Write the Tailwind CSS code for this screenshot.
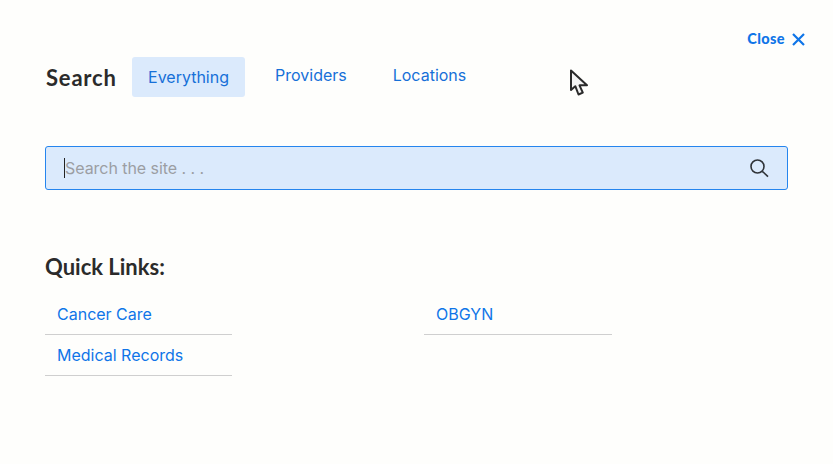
<!DOCTYPE html>
<html lang="en">
<head>
  <meta charset="UTF-8">
  <meta name="viewport" content="width=device-width, initial-scale=1.0">
  <title>Search</title>
  <script src="https://cdn.jsdelivr.net/npm/@tailwindcss/browser@4"></script>
</head>
<body class="bg-[#fefefc] h-[464px] overflow-hidden relative font-['Inter',sans-serif]">
  <div class="pl-[45px] pr-[45px] pt-[30px]">
    <!-- close -->
    <div class="flex justify-end items-center gap-[7px] h-[18px] mr-[-17px] text-[#0f75e8]">
      <span class="font-['Lato',sans-serif] font-black text-[14.500px] tracking-[0.4px]">Close</span>
      <svg class="w-[13px] h-[13px]" viewBox="0 0 13 13" fill="none" stroke="currentColor" stroke-width="2.200"><path d="M1 1l11 11M12 1L1 12"/></svg>
    </div>

    <!-- tabs -->
    <div class="flex items-center h-[40px] mt-[9px]">
      <h2 class="w-[87px] pl-[1px] font-['Lato',sans-serif] font-bold text-[22px] tracking-[0.8px] text-[#2b2b2b]">Search</h2>
      <button class="w-[113px] h-[40px] rounded-[3px] bg-[#dbeafc] text-[16px] text-[#1670d8]">Everything</button>
      <button class="ml-[30px] mb-[4px] text-[16px] text-[#1670d8]">Providers</button>
      <button class="ml-[46px] mb-[4px] text-[16px] text-[#1670d8]">Locations</button>
    </div>

    <!-- search box -->
    <div class="flex items-center justify-between h-[44px] mt-[49px] pl-[18px] pr-[18px] bg-[#dbeafc] border border-[#2585ee] rounded-[3px]">
      <span class="border-l border-[#222] h-[20px] leading-[20px] text-[16px] tracking-[-0.05px] text-[#9b9ea3]">Search the site . . .</span>
      <svg class="w-[20px] h-[20px]" viewBox="0 0 20 20" fill="none" stroke="#2f3338" stroke-width="1.600"><circle cx="8.500" cy="8.500" r="6.500"/><path d="M13.300 13.300L19 18.600"/></svg>
    </div>

    <h3 class="mt-[65px] font-['Lato',sans-serif] font-bold text-[22px] leading-[24px] text-[#2b2b2b]">Quick Links:</h3>

    <!-- links -->
    <div class="grid grid-cols-[187px_188px] gap-x-[192px] mt-[15px] text-[16px] text-[#0f75e8]">
      <a class="h-[41px] flex items-center pl-[12px] border-b border-[#cfcfcf]">Cancer Care</a>
      <a class="h-[41px] flex items-center pl-[12px] border-b border-[#cfcfcf]">OBGYN</a>
      <a class="h-[41px] flex items-center pl-[12px] border-b border-[#cfcfcf]">Medical Records</a>
    </div>
  </div>

  <!-- mouse pointer -->
  <svg class="absolute left-[569px] top-[69px] w-[20px] h-[28px]" viewBox="0 0 20 28" fill="#f4f4f4" stroke="#2a2a2a" stroke-width="2" stroke-linejoin="round"><path d="M2 1.500V21l4.300-3.800 3.200 8.300 4.300-1.900-3.300-7.300H18z"/></svg>
</body>
</html>
